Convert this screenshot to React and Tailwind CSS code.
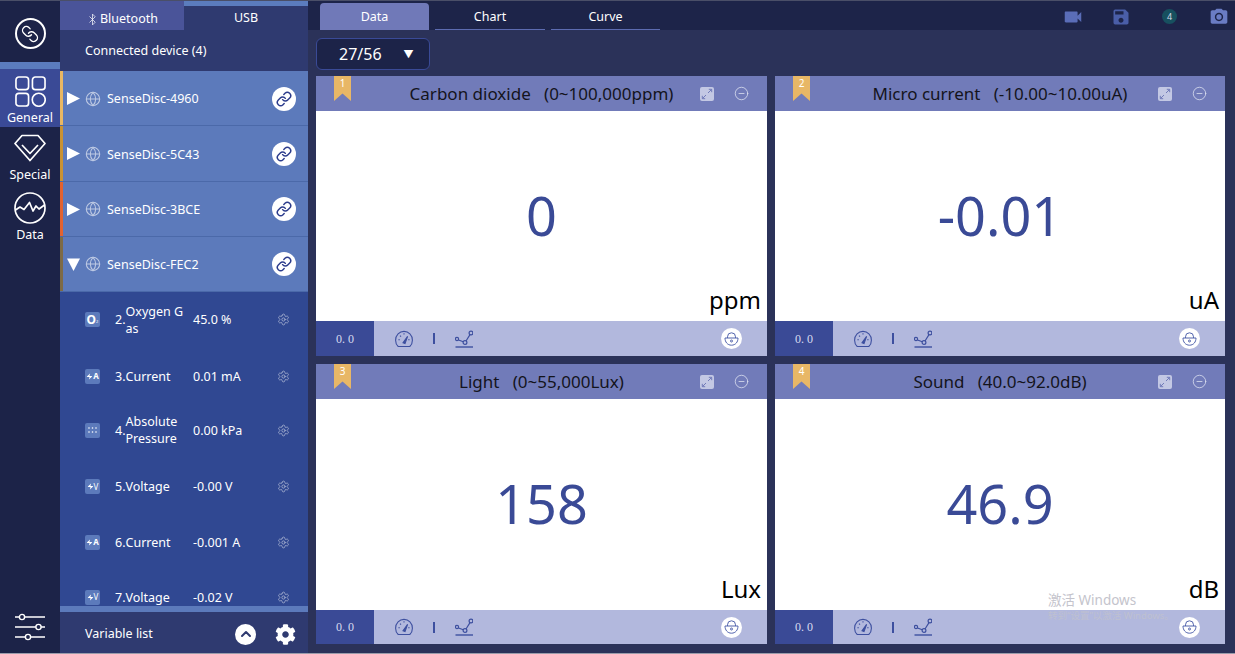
import React from 'react';
import { Bluetooth, Globe, Settings, CircleMinus, Zap, ChevronUp, Link } from 'lucide-react';
import { MdVideocam, MdSave, MdPhotoCamera } from 'react-icons/md';
import { FaCog } from 'react-icons/fa';

const FONT = "font-['Noto_Sans','Noto_Sans_CJK_SC',sans-serif]";

const devices = [
    { name: 'SenseDisc-4960', color: 'bg-[#e9b863]' },
    { name: 'SenseDisc-5C43', color: 'bg-[#c99233]' },
    { name: 'SenseDisc-3BCE', color: 'bg-[#e2622f]' },
    { name: 'SenseDisc-FEC2', color: 'bg-[#7d6a45]', open: true },
];

const variables = [
    { icon: 'o2', index: '2.', name: 'Oxygen Gas', value: '45.0 %' },
    { icon: 'ma', index: '3.', name: 'Current', value: '0.01 mA' },
    { icon: 'kpa', index: '4.', name: 'Absolute Pressure', value: '0.00 kPa' },
    { icon: 'v', index: '5.', name: 'Voltage', value: '-0.00 V' },
    { icon: 'a', index: '6.', name: 'Current', value: '-0.001 A' },
    { icon: 'v', index: '7.', name: 'Voltage', value: '-0.02 V' },
];

const cards = [
    { no: 1, title: 'Carbon dioxide   (0~100,000ppm)', value: '0', unit: 'ppm' },
    { no: 2, title: 'Micro current   (-10.00~10.00uA)', value: '-0.01', unit: 'uA' },
    { no: 3, title: 'Light   (0~55,000Lux)', value: '158', unit: 'Lux', lower: true },
    { no: 4, title: 'Sound   (40.0~92.0dB)', value: '46.9', unit: 'dB', lower: true },
];

const GeneralIcon = () => (
    <svg width="31" height="31" viewBox="0 0 32 32" fill="none" stroke="white" strokeWidth="1.7">
        <rect x="1" y="1" width="13" height="13" rx="3" />
        <rect x="18" y="1" width="13" height="13" rx="3" />
        <rect x="1" y="18" width="13" height="13" rx="3" />
        <circle cx="24.5" cy="24.5" r="6.7" />
    </svg>
);

const SpecialIcon = () => (
    <svg width="32" height="28" viewBox="0 0 32 28" fill="none" stroke="white" strokeWidth="1.7" strokeLinejoin="round">
        <path d="M8 1.5 H24 L31 9.5 L16 26.5 L1 9.5 Z" />
        <path d="M8 11 L16 19.5 L24 11" />
    </svg>
);

const DataIcon = () => (
    <svg width="32" height="32" viewBox="0 0 32 32" fill="none" stroke="white" strokeWidth="1.7" strokeLinejoin="round">
        <circle cx="16" cy="16" r="15" />
        <path d="M1.5 18 L6 15 L10 17.5 L15.5 10.5 L19 19 L22 14 L25 17 L30.5 13" />
    </svg>
);

const SlidersIcon = () => (
    <svg width="32" height="28" viewBox="0 0 32 28" fill="none" stroke="white" strokeWidth="1.4">
        <path d="M1 4 H31 M1 14 H31 M1 24 H31" />
        <circle cx="8" cy="4" r="2.6" fill="#1c2348" />
        <circle cx="24.5" cy="14" r="2.6" fill="#1c2348" />
        <circle cx="14" cy="24" r="2.6" fill="#1c2348" />
    </svg>
);

const LinkBadge = () => (
    <span className="flex h-6 w-6 items-center justify-center rounded-full bg-white">
        <Link size={16} strokeWidth={2.2} className="text-[#2c3c8c]" />
    </span>
);

const Ribbon = ({ no }) => (
    <div className="absolute left-[18px] top-0 h-[25px] w-[17px]">
        <svg width="17" height="25" viewBox="0 0 17 25" className="absolute inset-0">
            <path d="M0 0 H17 V25 L8.5 17.5 L0 25 Z" fill="#e8b766" />
        </svg>
        <span className="absolute inset-x-0 top-0 text-center text-[10px] leading-[15px] text-white">{no}</span>
    </div>
);

const ExpandIcon = () => (
    <svg width="14" height="14" viewBox="0 0 14 14" fill="none" className="absolute right-[53px]">
        <rect width="14" height="14" rx="2" fill="#c3c8e4" />
        <path d="M8 6 L11.5 2.5 M8.8 2.3 H11.7 V5.2 M6 8 L2.5 11.5 M5.2 11.7 H2.3 V8.8" stroke="#717bb9" strokeWidth="1" />
    </svg>
);

const GaugeIcon = () => (
    <svg width="18" height="18" viewBox="0 0 18 18" fill="none" stroke="#3d4f9f" strokeWidth="1.1" className="ml-[21px]">
        <path d="M3.2 16.5 C1.5 15 0.6 12.8 0.6 10.2 C0.6 5.2 4.4 1.4 9 1.4 C13.6 1.4 17.4 5.2 17.4 10.2 C17.4 12.8 16.5 15 14.8 16.5 Z" />
        <path d="M9 3.2 V4.6 M3.4 9.8 H4.8 M13.2 9.8 H14.6 M5 5.6 L6 6.6" />
        <path d="M8 12.8 L12.6 6.4 L10 13.6 Z" fill="#3d4f9f" />
    </svg>
);

const TrendIcon = () => (
    <svg width="18" height="18" viewBox="0 0 18 18" fill="none" stroke="#3d4f9f" strokeWidth="1.2">
        <path d="M0.5 17 H18" strokeWidth="1.4" />
        <circle cx="2" cy="9" r="1.6" />
        <circle cx="10" cy="12.5" r="1.9" />
        <circle cx="16" cy="3" r="1.9" />
        <path d="M3.5 10 L8.3 11.8 M11 11 L15 4.6" />
    </svg>
);

const LockBadge = () => (
    <span className="flex h-[21px] w-[21px] items-center justify-center rounded-full bg-white">
        <svg width="15" height="14" viewBox="0 0 15 14" fill="none" stroke="#5264ad" strokeWidth="1">
            <path d="M3.5 6 V4.8 A4 4 0 0 1 11.5 4.8 V6" />
            <path d="M1 6 H14 C14 10 11.5 13.2 7.5 13.2 C3.5 13.2 1 10 1 6 Z" />
            <circle cx="7.5" cy="9" r="1" />
        </svg>
    </span>
);

const VariableIcon = ({ type }) => (
    <span className="flex h-[15px] w-[15px] shrink-0 items-center justify-center rounded-[2px] bg-[#5c7abb] text-[9px] font-bold leading-none text-white">
        {type === 'o2' && <><span className="text-[12px]">O</span><span className="mt-[5px] text-[4px] font-normal">2</span></>}
        {type === 'ma' && <><Zap size={7} fill="white" strokeWidth={0} /><span className="text-[8px]">A</span></>}
        {type === 'a' && <><Zap size={7} fill="white" strokeWidth={0} /><span className="text-[8px]">A</span></>}
        {type === 'v' && <><Zap size={7} fill="white" strokeWidth={0} /><span className="text-[8px] font-normal">V</span></>}
        {type === 'kpa' && (
            <svg width="9" height="6" viewBox="0 0 9 6" fill="white">
                <circle cx="1" cy="1" r="0.8" /><circle cx="4.5" cy="1" r="0.8" /><circle cx="8" cy="1" r="0.8" />
                <circle cx="1" cy="5" r="0.8" /><circle cx="4.5" cy="5" r="0.8" /><circle cx="8" cy="5" r="0.8" />
            </svg>
        )}
    </span>
);

const SideItem = ({ icon, label, active, className = '', labelClass = 'mt-[3px]' }) => (
    <div className={`flex flex-col items-center text-[12.5px] leading-[15px] text-white ${active ? 'bg-[#3a4a96]' : ''} ${className}`}>
        {icon}
        <span className={labelClass}>{label}</span>
    </div>
);

const DeviceRow = ({ device }) => (
    <div className="flex h-[55.25px] border-b border-[#4b69a9] bg-[#5c7abb]">
        <div className={`w-[3px] ${device.color}`} />
        <div className="flex flex-1 items-center pl-[4px] pr-[12px] pt-[1px]">
            <svg width="13" height="13" viewBox="0 0 13 13" fill="white" className="shrink-0">
                {device.open ? <path d="M0 0.5 H13 L6.5 13 Z" /> : <path d="M0 0 L13 6.5 L0 13 Z" />}
            </svg>
            <Globe size={16} strokeWidth={1.6} className="ml-[5px] text-white opacity-60" />
            <span className="ml-[6px] mt-[2px] text-[12.5px] text-white">{device.name}</span>
            <span className="ml-auto"><LinkBadge /></span>
        </div>
    </div>
);

const VariableRow = ({ item }) => {
    const wraps = item.name.length > 8;
    return (
        <div className={`flex h-[55.25px] shrink-0 items-center pl-[25px] text-[12.5px] leading-[17px] text-white ${wraps ? '' : 'pt-[3px]'}`}>
            <VariableIcon type={item.icon} />
            <div className="ml-[15px] flex w-[78px] items-center">
                <span>{item.index}</span>
                <span className={wraps ? 'w-[60px] break-all' : ''}>{item.name}</span>
            </div>
            <span className="whitespace-pre">{item.value}</span>
            <Settings size={13} strokeWidth={1.2} className="absolute left-[217px] text-white opacity-70" />
        </div>
    );
};

const Card = ({ card }) => (
    <div className="flex flex-col">
        <div className="relative flex h-[35px] items-center justify-center bg-[#717bb9]">
            <Ribbon no={card.no} />
            <span className="whitespace-pre text-[17px] text-[#14141c]">{card.title}</span>
            <ExpandIcon />
            <CircleMinus size={15} strokeWidth={1.2} className="absolute right-[18px] text-[#e2e5f3]" />
        </div>
        <div className={`grid bg-white ${card.lower ? 'h-[211px]' : 'h-[210px]'}`}>
            <span className="col-start-1 row-start-1 self-center justify-self-center pb-[3px] text-[54px] leading-none text-[#3a4a96]">{card.value}</span>
            <span className="col-start-1 row-start-1 self-end justify-self-end pb-[5px] pr-[6px] text-[24px] leading-[32px] text-black">{card.unit}</span>
        </div>
        <div className={`flex items-center bg-[#b2b8dd] ${card.lower ? 'h-[34px]' : 'h-[35px]'}`}>
            <span className="flex h-full w-[58px] items-center justify-center bg-[#3a4a96] font-['Liberation_Serif',serif] text-[12px] text-[#d9dcf0]">0. 0</span>
            <GaugeIcon />
            <span className="ml-[20px] h-[11px] w-[1.5px] bg-[#3d4f9f]" />
            <span className="ml-[20px]"><TrendIcon /></span>
            <span className="ml-auto mr-[25px]"><LockBadge /></span>
        </div>
    </div>
);

export default function App() {
    return (
        <div className={`relative flex h-[654px] w-[1235px] overflow-hidden bg-[#2b3259] ${FONT}`}>
            <aside className="flex w-[60px] shrink-0 flex-col bg-[#1c2348]">
                <div className="flex h-[62px] items-center justify-center pt-[5px]">
                    <span className="flex h-[31px] w-[31px] items-center justify-center rounded-full border-2 border-white">
                        <Link size={18} strokeWidth={1.8} className="-scale-x-100 text-white" />
                    </span>
                </div>
                <div className="h-[7px] bg-[#5b7cbe]" />
                <SideItem active icon={<GeneralIcon />} label="General" className="h-[58px] pt-[7px]" labelClass="mt-[3px]" />
                <SideItem icon={<SpecialIcon />} label="Special" className="h-[59px] pt-[7px]" labelClass="mt-[5px]" />
                <SideItem icon={<DataIcon />} label="Data" className="pt-[6px]" />
                <div className="mt-auto flex justify-center pb-[13px]"><SlidersIcon /></div>
            </aside>

            <section className="relative flex w-[248px] shrink-0 flex-col bg-[#2f3a70] text-white">
                <div className="flex h-[30px] text-[12.5px]">
                    <div className="flex w-[124px] items-center justify-center gap-[1px] bg-[#4a5499] pt-[8px]">
                        <Bluetooth size={13} strokeWidth={1.3} />
                        <span>Bluetooth</span>
                    </div>
                    <div className="flex w-[124px] flex-col">
                        <div className="h-[6px] bg-[#5b7cbe]" />
                        <div className="flex flex-1 items-center justify-center">USB</div>
                    </div>
                </div>
                <div className="flex h-[41px] items-center pl-[25px] pt-[2px] text-[12.5px]">Connected device (4)</div>
                {devices.map((d) => <DeviceRow key={d.name} device={d} />)}
                <div className="relative flex h-[314px] flex-col overflow-hidden bg-[#304892]">
                    {variables.map((v) => <VariableRow key={v.index} item={v} />)}
                </div>
                <div className="h-[6px] bg-[#5c7abb]" />
                <div className="flex flex-1 items-center pl-[25px] pr-[12px] pt-[2px] text-[12.5px]">
                    <span>Variable list</span>
                    <span className="ml-auto flex h-[21px] w-[21px] items-center justify-center rounded-full bg-white">
                        <ChevronUp size={16} strokeWidth={3} className="text-[#2f3a70]" />
                    </span>
                    <FaCog size={21} className="ml-[19px]" />
                </div>
            </section>

            <main className="flex flex-1 flex-col">
                <div className="flex h-[30px] items-end bg-[#1d2449] pl-[12px] text-[12.5px] text-white">
                    <div className="flex h-[27px] w-[109px] items-center justify-center rounded-t-[4px] bg-[#7079b8] pt-[2px]">Data</div>
                    <div className="ml-[6px] flex h-[27px] w-[110px] items-center justify-center rounded-t-[3px] border-b-[1.5px] border-[#5c6bb0] pt-[3px]">Chart</div>
                    <div className="ml-[6px] flex h-[27px] w-[109px] items-center justify-center rounded-t-[3px] border-b-[1.5px] border-[#5c6bb0] pt-[3px]">Curve</div>
                    <div className="ml-auto flex h-full items-center pr-[6px] pt-[3px]">
                        <MdVideocam size={22} className="text-[#5a6db8]" />
                        <MdSave size={20} className="ml-[27px] text-[#4a5ea8]" />
                        <span className="ml-[31px] flex h-[15px] w-[15px] items-center justify-center rounded-full bg-[#17505f] text-[9px] text-[#d6dbe8]">4</span>
                        <MdPhotoCamera size={20} className="ml-[32px] text-[#6a7cc4]" />
                    </div>
                </div>
                <div className="ml-[8px] mt-[8px] flex h-[32px] w-[114px] items-center rounded-[6px] border border-[#3a4a96] bg-[#1c2348] pl-[22px] text-[16px] text-white">
                    <span>27/56</span>
                    <span className="ml-[22px] text-[10px]">▼</span>
                </div>
                <div className="ml-[8px] mt-[6px] grid w-[909px] grid-cols-[451px_450px] gap-[8px]">
                    {cards.map((c) => <Card key={c.no} card={c} />)}
                </div>
            </main>

            <div className="pointer-events-none absolute left-[1048px] top-[592px] text-[#c4c4cc]">
                <div className="text-[13.5px] leading-[16px]">激活 Windows</div>
                <div className="mt-[2px] text-[9.5px] leading-[12px] opacity-70">转到“设置”以激活 Windows。</div>
            </div>

            <div className="absolute inset-x-0 top-0 h-px bg-[#4a4f68]" />
            <div className="absolute inset-x-0 bottom-0 h-px bg-[#9a9cab]" />
        </div>
    );
}
